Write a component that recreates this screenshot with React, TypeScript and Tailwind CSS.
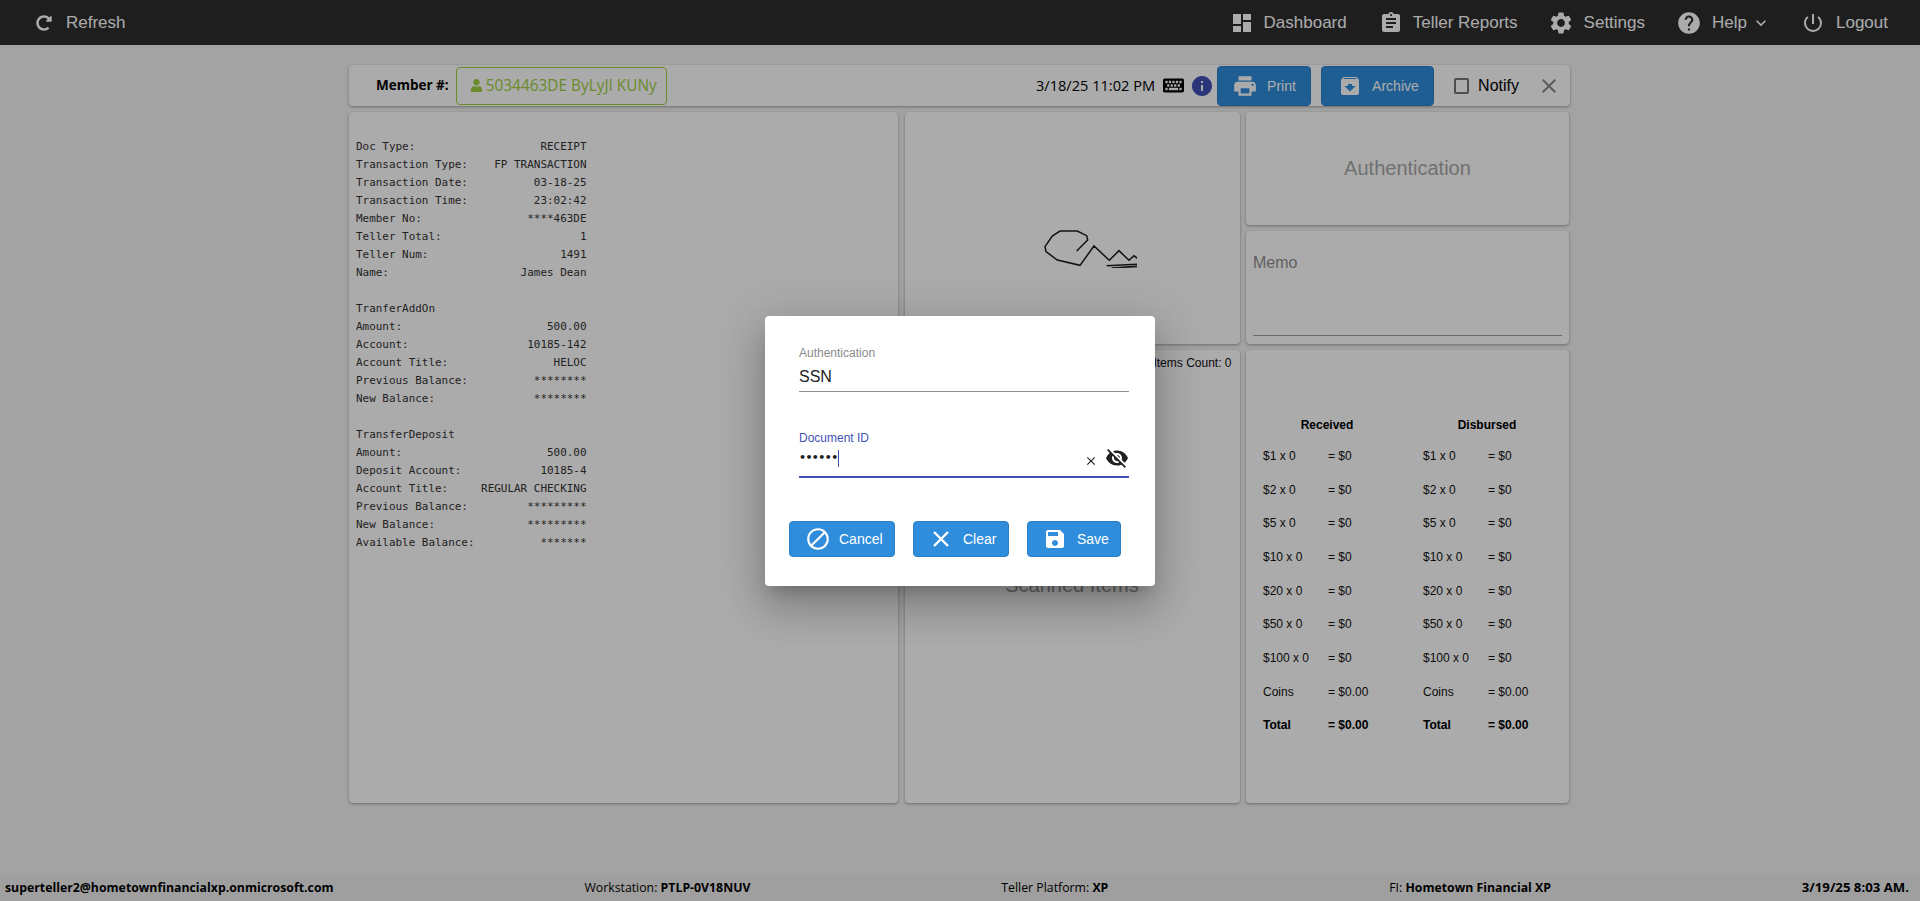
import React from "react";
import { FaKeyboard, FaRedoAlt, FaUser } from "react-icons/fa";
import {
  MdArchive,
  MdAssignment,
  MdBlock,
  MdClose,
  MdDashboard,
  MdHelp,
  MdInfo,
  MdKeyboardArrowDown,
  MdPowerSettingsNew,
  MdPrint,
  MdSave,
  MdSettings,
  MdVisibilityOff,
} from "react-icons/md";

const COLS = 35;

// label on the left, value pushed to the right edge of the receipt
const row = (label: string, value = "") =>
  value ? label.padEnd(COLS - value.length) + value : label;

const receipt = [
  row("Doc Type:", "RECEIPT"),
  row("Transaction Type:", "FP TRANSACTION"),
  row("Transaction Date:", "03-18-25"),
  row("Transaction Time:", "23:02:42"),
  row("Member No:", "****463DE"),
  row("Teller Total:", "1"),
  row("Teller Num:", "1491"),
  row("Name:", "James Dean"),
  "",
  row("TranferAddOn"),
  row("Amount:", "500.00"),
  row("Account:", "10185-142"),
  row("Account Title:", "HELOC"),
  row("Previous Balance:", "********"),
  row("New Balance:", "********"),
  "",
  row("TransferDeposit"),
  row("Amount:", "500.00"),
  row("Deposit Account:", "10185-4"),
  row("Account Title:", "REGULAR CHECKING"),
  row("Previous Balance:", "*********"),
  row("New Balance:", "*********"),
  row("Available Balance:", "*******"),
].join("\n");

const denominations = [1, 2, 5, 10, 20, 50, 100];

const navItems = [
  { label: "Dashboard", icon: <MdDashboard size={24} />, gap: "mr-[32px]" },
  { label: "Teller Reports", icon: <MdAssignment size={24} />, gap: "mr-[30px]" },
  { label: "Settings", icon: <MdSettings size={26} />, gap: "mr-[31px]" },
];

const Card = ({ className = "", children }: { className?: string; children?: React.ReactNode }) => (
  <div className={`bg-white rounded-[4px] shadow-[0_1px_3px_rgba(0,0,0,0.35)] ${className}`}>{children}</div>
);

const BlueButton = ({
  icon,
  label,
  className = "",
}: {
  icon: React.ReactNode;
  label: string;
  className?: string;
}) => (
  <button
    className={`flex items-center bg-[#2f8ddc] border border-[#2a80c8] rounded-[4px] text-white text-sm ${className}`}
  >
    {icon}
    {label}
  </button>
);

const TillColumn = ({ title }: { title: string }) => (
  <div className="w-[160px] shrink-0">
    <div className="w-[128px] h-[25px] flex items-center justify-center text-xs font-bold text-black">{title}</div>
    <div className="mt-[2px]">
      {denominations.map((d) => (
        <div key={d} className="flex items-center h-[33.7px] text-xs text-[#111]">
          <span className="w-[65px]">{`$${d} x 0`}</span>
          <span>= $0</span>
        </div>
      ))}
      <div className="flex items-center h-[33.7px] text-xs text-[#111]">
        <span className="w-[65px]">Coins</span>
        <span>= $0.00</span>
      </div>
      <div className="flex items-center h-[33.7px] text-xs font-bold text-black">
        <span className="w-[65px]">Total</span>
        <span>= $0.00</span>
      </div>
    </div>
  </div>
);

const Signature = () => (
  <svg width="129" height="80" viewBox="0 0 129 80" fill="none" stroke="#1c1c1c" aria-hidden>
    <g transform="translate(12 37) scale(0.3333)">
      <polyline points="170,78 203,45 200,32 172,18 120,18 97,33 75,65 78,80 112,105 180,121 222,63 268,106 297,77 327,106 342,92 352,100" strokeWidth="4.5" />
      <path d="M260 122 L352 118" strokeWidth="4.5" />
      <path d="M275 129 L352 124" strokeWidth="5" />
    </g>
  </svg>
);

const ClearIcon = () => (
  <svg width="16" height="16" viewBox="0 0 16 16" stroke="currentColor" strokeWidth="2.4" className="mr-[14px] ml-[5px]" aria-hidden>
    <path d="M1 1 L15 15 M15 1 L1 15" />
  </svg>
);

export default function App() {
  return (
    <div className="relative flex flex-col h-[901px] overflow-hidden bg-[#f3f3f3] font-['Liberation_Sans',Arial,sans-serif]">
      <header className="flex items-center justify-between h-[45px] shrink-0 bg-[#2d2d2d] text-white text-[17px]">
        <div className="flex items-center pl-[36px]">
          <FaRedoAlt size={16} className="mr-[14px]" />
          Refresh
        </div>
        <nav className="flex items-center pr-[32px]">
          {navItems.map((item) => (
            <div key={item.label} className={`flex items-center ${item.gap}`}>
              <span className="mr-[10px]">{item.icon}</span>
              {item.label}
            </div>
          ))}
          <div className="flex items-center mr-[30px]">
            <MdHelp size={26} className="mr-[10px]" />
            Help
            <MdKeyboardArrowDown size={20} className="ml-[4px]" />
          </div>
          <div className="flex items-center">
            <MdPowerSettingsNew size={24} className="mr-[11px]" />
            Logout
          </div>
        </nav>
      </header>

      <main className="flex-1 w-[1221px] pt-[20px] ml-[349px]">
        <Card className="flex items-center h-[41px] pl-[27px] pr-[9px]">
          <span className="font-['Open_Sans',sans-serif] font-bold text-[13.5px] text-black mr-[7px]">Member #:</span>
          <div className="flex items-center w-[211px] h-[38px] pl-[13px] border border-[#a0cf3f] rounded-[4px] text-[#a0cf3f] font-['Open_Sans',sans-serif] text-[15.4px]">
            <FaUser size={13} className="mr-[3px]" />
            5034463DE ByLyJI KUNy
          </div>
          <span className="ml-auto font-['Open_Sans',sans-serif] text-[14.6px] text-black">3/18/25 11:02 PM</span>
          <FaKeyboard size={21} className="ml-[8px] text-black" />
          <MdInfo size={24} className="ml-[6px] mr-[3px] text-[#3f51b5]" />
          <BlueButton
            icon={<MdPrint size={26} className="mr-[9px]" />}
            label="Print"
            className="w-[94px] h-[40px] pl-[14px]"
          />
          <BlueButton
            icon={<MdArchive size={24} className="mr-[10px]" />}
            label="Archive"
            className="w-[113px] h-[40px] pl-[16px] ml-[10px]"
          />
          <span className="w-[15px] h-[16px] ml-[20px] mr-[9px] border-2 border-[#757575] rounded-[2px]" />
          <span className="text-base text-black">Notify</span>
          <MdClose size={24} className="ml-[18px] text-[#8a8a8a]" />
        </Card>

        <div className="grid grid-cols-[549px_335px_323px] gap-x-[6.5px] mt-[6px] h-[691px]">
          <Card className="pl-[7px] pt-[26px]">
            <pre className="font-['DejaVu_Sans_Mono',monospace] text-[10.95px] leading-[18px] text-[#333]">{receipt}</pre>
          </Card>

          <div className="flex flex-col gap-[6px]">
            <Card className="flex items-center justify-center h-[232px]">
              <Signature />
            </Card>
            <Card className="flex-1 flex flex-col pb-[4px]">
              <div className="text-right text-xs text-[#111] pr-[8px] pt-[5px] h-[20px]">Items Count: 0</div>
              <div className="flex-1 flex items-center justify-center text-xl text-[#999]">Scanned Items</div>
            </Card>
          </div>

          <div className="flex flex-col gap-[6px]">
            <Card className="flex items-center justify-center h-[113px] pb-[2px] text-xl text-[#a8a8a8]">Authentication</Card>
            <Card className="flex flex-col h-[113px] px-[7px]">
              <div className="text-base text-[#909090] pt-[20px] flex-1">Memo</div>
              <div className="border-b border-[#9e9e9e] mb-[8px]" />
            </Card>
            <Card className="flex-1 flex pl-[17px] pt-[62px]">
              <TillColumn title="Received" />
              <TillColumn title="Disbursed" />
            </Card>
          </div>
        </div>
      </main>

      <footer className="flex items-center justify-between h-[26px] shrink-0 pl-[5px] pr-[11px] bg-[#eeeeee] font-['Open_Sans',sans-serif] text-[12.3px] text-black">
        <b>superteller2@hometownfinancialxp.onmicrosoft.com</b>
        <span>
          Workstation: <b>PTLP-0V18NUV</b>
        </span>
        <span className="mr-[30px]">
          Teller Platform: <b>XP</b>
        </span>
        <span>
          FI: <b>Hometown Financial XP</b>
        </span>
        <b className="text-[13.2px]">3/19/25 8:03 AM.</b>
      </footer>

      {/* modal backdrop + dialog */}
      <div className="absolute inset-0 flex items-center justify-center bg-black/[0.33]">
        <div className="w-[390px] h-[270px] bg-white rounded-[4px] shadow-[0_11px_15px_-7px_rgba(0,0,0,0.2),0_24px_38px_3px_rgba(0,0,0,0.14),0_9px_46px_8px_rgba(0,0,0,0.12)] px-[24px] pt-[30px]">
          <div className="pl-[10px] pr-[2px]">
            <div className="text-xs text-[#8a8a8a] leading-[14px]">Authentication</div>
            <div className="text-base text-[#212121] h-[32px] pt-[5px] border-b border-[#8f8f8f]">SSN</div>

            <div className="text-xs text-[#3f51b5] leading-[14px] mt-[39px]">Document ID</div>
            <div className="flex items-center h-[33px] border-b-2 border-[#3f51b5] text-[#212121]">
              <span className="text-[11px] font-bold tracking-[-0.6px] -mt-[4px] font-['DejaVu_Sans',sans-serif]">••••••</span>
              <span className="w-px h-[17px] bg-[#3f51b5] -mt-[4px]" />
              <MdClose size={14} className="ml-auto mr-[7px] mt-[2px]" />
              <MdVisibilityOff size={24} className="-mt-[5px]" />
            </div>
          </div>

          <div className="flex gap-[18px] mt-[43px]">
            <BlueButton
              icon={<MdBlock size={26} className="mr-[8px]" />}
              label="Cancel"
              className="w-[106px] h-[36px] pl-[15px]"
            />
            <BlueButton icon={<ClearIcon />} label="Clear" className="w-[96px] h-[36px] pl-[14px]" />
            <BlueButton
              icon={<MdSave size={24} className="mr-[10px]" />}
              label="Save"
              className="w-[94px] h-[36px] pl-[15px]"
            />
          </div>
        </div>
      </div>
    </div>
  );
}
